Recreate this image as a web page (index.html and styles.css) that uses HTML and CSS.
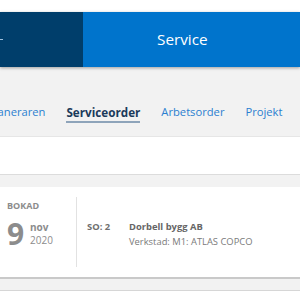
FILE: index.html
```html
<!DOCTYPE html>
<html>
<head>
<meta charset="utf-8">
<link rel="stylesheet" href="styles.css">
</head>
<body>
<div class="page">
  <div class="topgap"></div>
  <header class="header">
    <div class="header-left"><span class="dash"></span></div>
    <div class="header-right">Service</div>
  </header>
  <nav class="tabs">
    <span class="tab tab-first">Planeraren</span>
    <span class="tab tab-active">Serviceorder</span>
    <span class="tab">Arbetsorder</span>
    <span class="tab">Projekt</span>
  </nav>
  <div class="blank"></div>
  <div class="list">
    <div class="card">
      <div class="date-col">
        <div class="status">BOKAD</div>
        <div class="date-row">
          <span class="day">9</span>
          <div class="month-year">
            <span class="month">nov</span>
            <span class="year">2020</span>
          </div>
        </div>
      </div>
      <div class="info">
        <span class="so">SO: 2</span>
        <div class="details">
          <span class="customer">Dorbell bygg AB</span>
          <span class="workshop">Verkstad: M1: ATLAS COPCO</span>
        </div>
      </div>
    </div>
    <div class="card-next"></div>
  </div>
</div>
</body>
</html>
```

FILE: styles.css
```css
* { box-sizing: border-box; }
html, body { margin: 0; padding: 0; }
body {
  background: #ffffff;
  font-family: "Open Sans", "Liberation Sans", sans-serif;
  width: 300px;
  height: 300px;
  overflow: hidden;
}
.page { width: 300px; }
.topgap { height: 12px; background: #ffffff; }
.header {
  display: flex;
  height: 55px;
  position: relative;
  z-index: 2;
  box-shadow: 0 1px 3px rgba(0, 0, 0, 0.35);
}
.header-left {
  width: 83px;
  background: #003e6b;
  display: flex;
  align-items: center;
}
.dash {
  display: block;
  width: 3px;
  height: 1px;
  background: #9fc0dc;
}
.header-right {
  flex: 1;
  background: #0074cc;
  color: #ffffff;
  font-size: 15.3px;
  line-height: 55px;
  padding-left: 74px;
}
.tabs {
  height: 70px;
  background: #f2f2f2;
  display: flex;
  align-items: flex-end;
  gap: 21px;
  padding-bottom: 13px;
  margin-left: -12px;
  border-bottom: 1px solid #e6e6e6;
}
.tab {
  font-size: 11.2px;
  line-height: 16px;
  color: #2a7fd0;
  padding-bottom: 1px;
  border-bottom: 2px solid transparent;
}
.tab-active {
  font-weight: 700;
  font-size: 11.7px;
  color: #1b3a5a;
  border-bottom-color: #8ea4ba;
}
.blank { height: 37px; background: #ffffff; }
.list {
  background: #f2f2f2;
  border-top: 1px solid #dcdcdc;
  padding-top: 12px;
}
.card {
  background: #ffffff;
  display: flex;
  align-items: center;
  height: 92px;
  padding: 11px 0 12px;
  border-bottom: 2px solid #c9c9c9;
  margin-left: -4px;
}
.date-col {
  width: 81px;
  height: 70px;
  border-right: 1px solid #e2e2e2;
  padding-left: 11px;
  color: #8c8c8c;
}
.status {
  font-size: 9px;
  font-weight: 700;
  line-height: 12px;
  margin-top: 3px;
}
.date-row {
  display: flex;
  align-items: center;
  margin-top: 7px;
}
.day {
  font-size: 30px;
  font-weight: 700;
  line-height: 30px;
  width: 23px;
}
.month-year {
  display: flex;
  flex-direction: column;
  font-size: 10px;
  line-height: 13px;
}
.month { font-weight: 700; }
.info {
  display: flex;
  align-items: flex-start;
  padding-left: 10px;
  margin-top: 4px;
  font-size: 9.4px;
  line-height: 15px;
  color: #6e6e6e;
}
.so { font-weight: 700; width: 42px; }
.details { display: flex; flex-direction: column; }
.customer { font-weight: 700; color: #666666; }
.workshop { color: #7a7a7a; }
.card-next {
  height: 12px;
  border-bottom: 1px solid #d6d6d6;
}
```
